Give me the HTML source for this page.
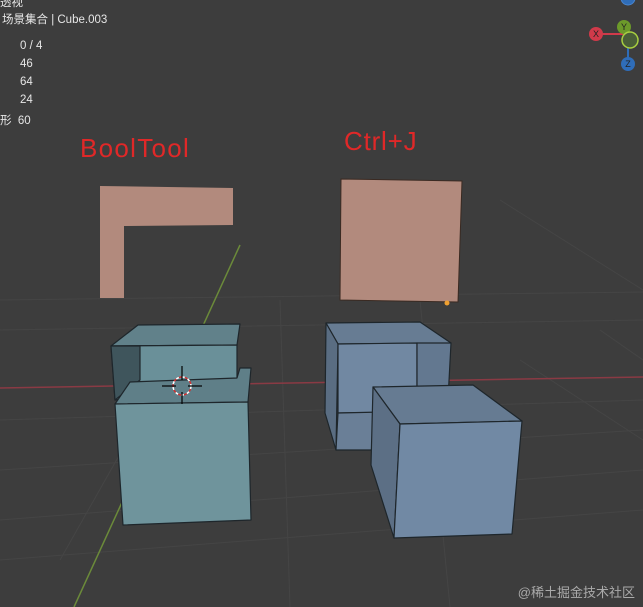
<!DOCTYPE html><html><head><meta charset="utf-8"><style>
body{margin:0;width:643px;height:607px;overflow:hidden;background:#3d3d3d;font-family:"Liberation Sans","Noto Sans CJK SC",sans-serif}
.t{position:absolute;color:#e6e6e6;font-size:11.5px}
</style></head><body>
<svg width="643" height="607" style="position:absolute;left:0;top:0">
<g stroke="#454545" stroke-width="1" fill="none">
<line x1="0" y1="470" x2="643" y2="430"/><line x1="0" y1="560" x2="643" y2="510"/>
<line x1="0" y1="330" x2="643" y2="320"/><line x1="0" y1="300" x2="643" y2="292"/>
<line x1="0" y1="420" x2="643" y2="400"/><line x1="0" y1="520" x2="643" y2="470"/>
<line x1="500" y1="200" x2="643" y2="290"/><line x1="520" y1="360" x2="643" y2="440"/>
<line x1="280" y1="300" x2="290" y2="607"/><line x1="190" y1="330" x2="60" y2="560"/>
<line x1="420" y1="300" x2="450" y2="607"/><line x1="600" y1="330" x2="643" y2="360"/>
</g>
<line x1="0" y1="388" x2="643" y2="377" stroke="#8a3a44" stroke-width="1.5"/>
<line x1="240" y1="245" x2="74" y2="607" stroke="#6b8a3a" stroke-width="1.5"/>
<polygon points="100,186 233,188 233,225 124,226 124,298 100,298" fill="#b28a7d"/>
<polygon points="341,179 462,181 458,302 340,300" fill="#b28a7d" stroke="#3a2a22"/>
<circle cx="447" cy="303" r="2.5" fill="#f0a030"/>
<g stroke="#1e262b" stroke-width="1.2" stroke-linejoin="round">
<polygon points="111,346 138,325 240,324 237,345" fill="#61818a"/>
<polygon points="111,346 237,345 237,379 115,400" fill="#6a9099"/>
<polygon points="111,346 140,346 140,380 115,400" fill="#3f555c"/>
<polygon points="115,404 130,382 237,378 240,368 251,368 248,402" fill="#5f7f88"/>
<polygon points="115,404 248,402 251,520 123,525" fill="#6f949c"/>
<polygon points="326,323 420,322 451,343 338,344" fill="#677c93"/>
<polygon points="326,323 338,344 336,450 325,413" fill="#5a6d82"/>
<polygon points="338,344 417,343 417,412 338,413" fill="#7188a2"/>
<polygon points="417,343 451,343 448,400 417,400" fill="#637890"/>
<polygon points="338,413 383,412 380,450 336,450" fill="#6a7f97"/>
<polygon points="373,387 473,385 522,421 400,424" fill="#667b92"/>
<polygon points="373,387 400,424 394,538 371,465" fill="#5c6f85"/>
<polygon points="400,424 522,421 512,534 394,538" fill="#7189a4"/>
</g>
<circle cx="182" cy="386" r="9" fill="none" stroke="#fff" stroke-width="1.5" stroke-dasharray="3 3"/>
<circle cx="182" cy="386" r="9" fill="none" stroke="#d03030" stroke-width="1.5" stroke-dasharray="3 3" stroke-dashoffset="3"/>
<g stroke="#000" stroke-width="1.2"><line x1="162" y1="386" x2="176" y2="386"/><line x1="188" y1="386" x2="202" y2="386"/><line x1="182" y1="366" x2="182" y2="380"/><line x1="182" y1="392" x2="182" y2="404"/></g>
<circle cx="628" cy="-2" r="7" fill="#2f6db8" stroke="#4a86d0"/>
<line x1="596" y1="34" x2="628" y2="34" stroke="#d03a4a" stroke-width="2"/>
<line x1="628" y1="40" x2="628" y2="62" stroke="#2f6db8" stroke-width="2"/>
<circle cx="596" cy="34" r="7" fill="#d03a4a"/>
<circle cx="624" cy="27" r="7" fill="#6c9a2a"/>
<circle cx="630" cy="40" r="8" fill="#4a5e38" stroke="#a8d040" stroke-width="1.5"/>
<circle cx="628" cy="64" r="7" fill="#2f6db8"/>
<g font-family="Liberation Sans" font-size="9" fill="#222" text-anchor="middle"><text x="596" y="37">X</text><text x="624" y="30">Y</text><text x="628" y="67">Z</text></g>
</svg>
<div class="t" style="left:0;top:-6px">透视</div>
<div class="t" style="left:2px;top:11px">场景集合 | Cube.003</div>
<div class="t" style="left:20px;top:40px">0 / 4</div>
<div class="t" style="left:20px;top:58px">46</div>
<div class="t" style="left:20px;top:76px">64</div>
<div class="t" style="left:20px;top:94px">24</div>
<div class="t" style="left:0;top:112px">形&nbsp;&nbsp;60</div>
<div style="position:absolute;left:80px;top:133px;color:#e02828;font-size:26px;letter-spacing:1.3px">BoolTool</div>
<div style="position:absolute;left:344px;top:126px;color:#e02828;font-size:26px;letter-spacing:0.8px">Ctrl+J</div>
<div style="position:absolute;right:8px;bottom:6px;color:#aaa;font-size:13px">@稀土掘金技术社区</div>
</body></html>
